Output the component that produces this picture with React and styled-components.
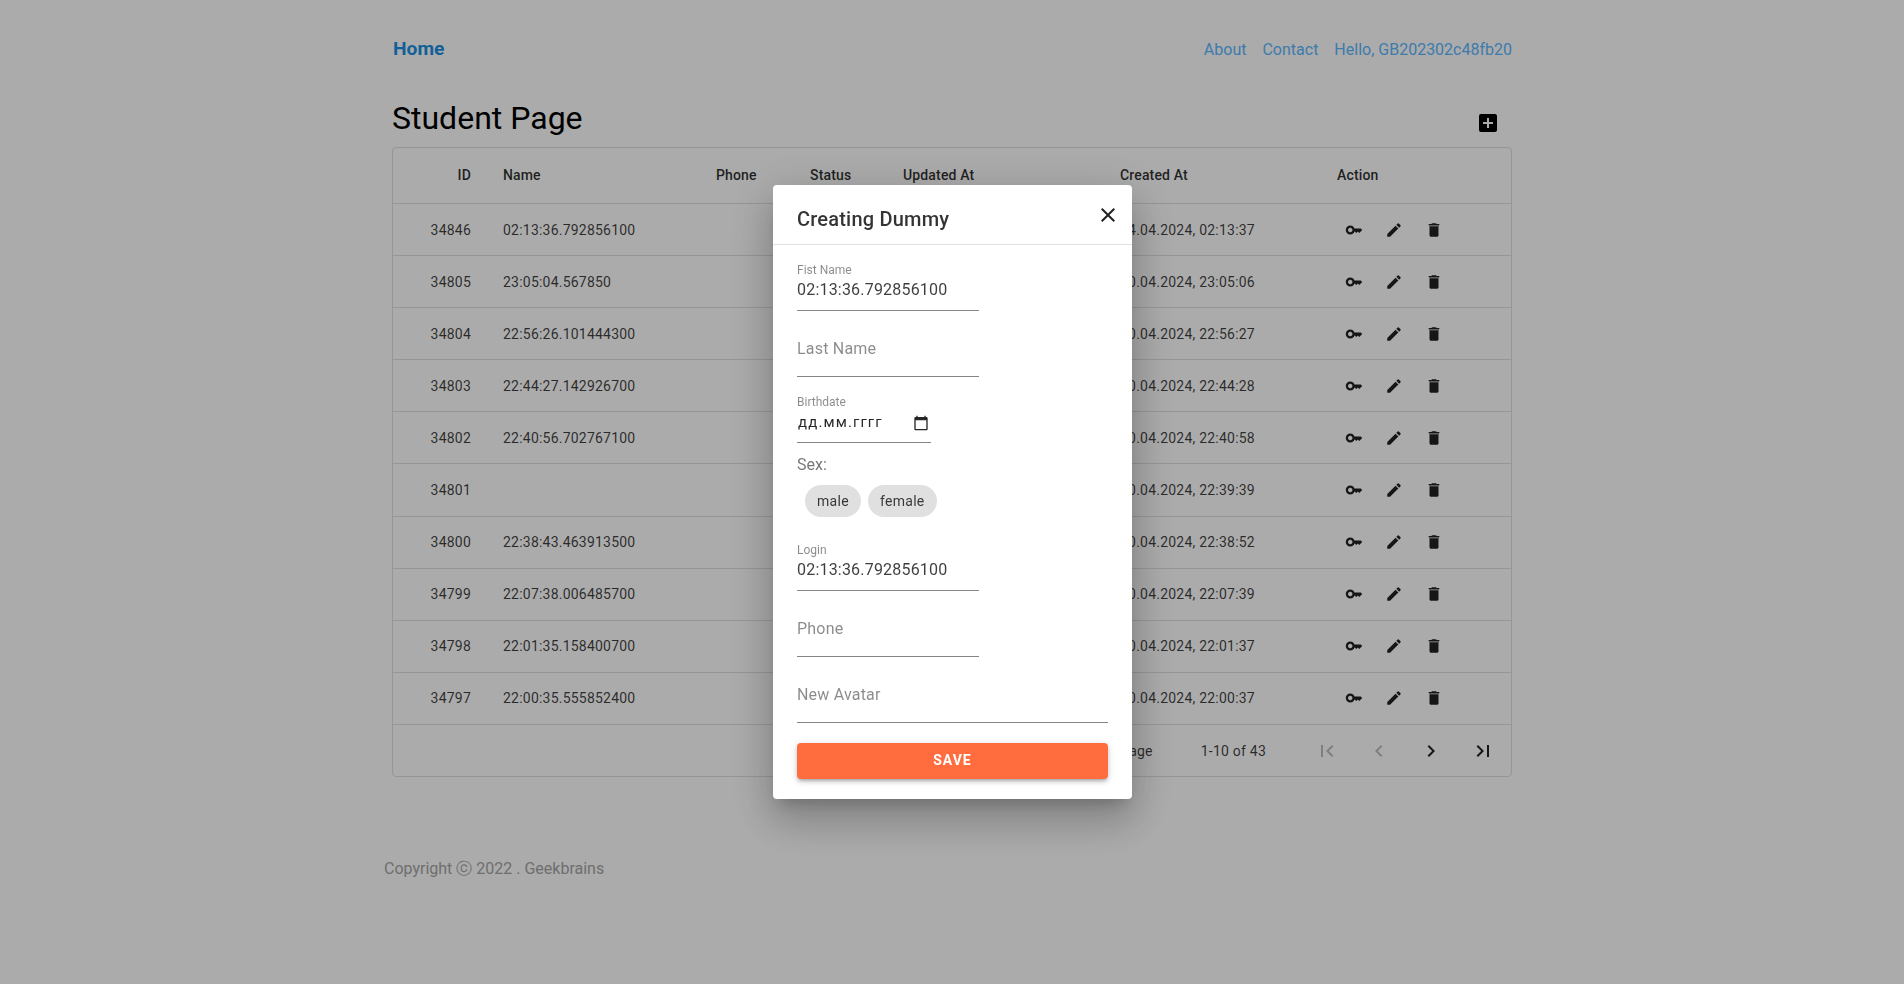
import React from 'react';
import styled, { createGlobalStyle } from 'styled-components';
import {
  MdKey, MdEdit, MdDelete, MdAddBox, MdClose,
  MdFirstPage, MdLastPage, MdChevronLeft, MdChevronRight,
} from 'react-icons/md';

const GlobalStyle = createGlobalStyle`
  html, body {
    margin: 0;
    padding: 0;
    background: #fff;
    font-family: Roboto, "Liberation Sans", sans-serif;
  }
`;

const Page = styled.div`
  width: 1136px;
  margin: 0 auto;
`;

const Main = styled.main`
  padding: 0 8px;
`;

const Nav = styled.nav`
  height: 98px;
  display: flex;
  align-items: center;
  justify-content: space-between;
`;

const HomeLink = styled.a`
  margin: 0 0 2px 1px;
  font-size: 19.2px;
  font-weight: 700;
  color: #1a8fe3;
`;

const NavLinks = styled.div`
  display: flex;
  gap: 16px;
`;

const NavLink = styled.a`
  font-size: 16px;
  color: #5cb8ff;
`;

const TitleRow = styled.div`
  height: 49px;
  display: flex;
  justify-content: space-between;
  align-items: flex-start;
`;

const Title = styled.h1`
  margin: 0;
  font-size: 32px;
  font-weight: 400;
  line-height: 40px;
  color: #000;
`;

const AddButton = styled.button`
  width: 40px;
  height: 40px;
  margin: 5px 4px 0 0;
  padding: 0;
  border: 0;
  background: none;
  color: #000;
  display: flex;
  align-items: center;
  justify-content: center;
`;

const TableFrame = styled.section`
  border: 1px solid rgba(0, 0, 0, 0.12);
  border-radius: 4px;
`;

const Row = styled.div`
  display: grid;
  grid-template-columns: 94px 213px 94px 93px 217px 217px 1fr;
  align-items: center;
  height: ${(p) => (p.$head ? '56px' : '52.1px')};
  padding-bottom: ${(p) => (p.$head ? '2px' : '0')};
  box-sizing: border-box;
  border-bottom: 1px solid rgba(0, 0, 0, 0.12);
  font-size: 14px;
  font-weight: ${(p) => (p.$head ? 500 : 400)};
  letter-spacing: ${(p) => (p.$head ? '0.15px' : '0.22px')};
  color: rgba(0, 0, 0, ${(p) => (p.$head ? 0.82 : 0.76)});
`;

const Cell = styled.div`
  padding: 0 16px;
  text-align: ${(p) => (p.$right ? 'right' : 'left')};
  white-space: nowrap;
`;

const Actions = styled.div`
  display: flex;
  padding-left: 13px;
`;

const ActionButton = styled.button`
  width: 40px;
  height: 40px;
  padding: 0;
  border: 0;
  background: none;
  color: rgba(0, 0, 0, 0.87);
  display: flex;
  align-items: center;
  justify-content: center;
`;

const Pagination = styled.div`
  height: 51px;
  box-sizing: border-box;
  padding: 1px 2px 0 0;
  display: flex;
  align-items: center;
  justify-content: flex-end;
  font-size: 14px;
  letter-spacing: 0.22px;
  color: rgba(0, 0, 0, 0.76);
`;

const RowsLabel = styled.span`
  margin-right: 48px;
`;

const PageCount = styled.span`
  margin-right: 35px;
`;

const PageButton = styled.button`
  width: 52px;
  height: 40px;
  padding: 0;
  border: 0;
  background: none;
  color: ${(p) => (p.disabled ? 'rgba(0, 0, 0, 0.26)' : 'rgba(0, 0, 0, 0.87)')};
  display: flex;
  align-items: center;
  justify-content: center;
`;

const Footer = styled.footer`
  margin-top: 80px;
  font-size: 16px;
  line-height: 24px;
  color: #a6a6a6;
`;

const Backdrop = styled.div`
  position: fixed;
  inset: 0;
  padding-left: 1px;
  background: rgba(0, 0, 0, 0.33);
  display: flex;
  align-items: center;
  justify-content: center;
`;

const Dialog = styled.div`
  width: 359px;
  background: #fff;
  border-radius: 4px;
  box-shadow: 0 11px 15px -7px rgba(0, 0, 0, 0.2), 0 24px 38px 3px rgba(0, 0, 0, 0.14), 0 9px 46px 8px rgba(0, 0, 0, 0.12);
`;

const DialogHead = styled.div`
  height: 60px;
  box-sizing: border-box;
  padding: 0 12px 0 24px;
  border-bottom: 1px solid #e0e0e0;
  display: flex;
  align-items: center;
  justify-content: space-between;
`;

const DialogTitle = styled.h2`
  margin: 8px 0 0;
  font-size: 20px;
  font-weight: 500;
  letter-spacing: 0.2px;
  color: rgba(0, 0, 0, 0.8);
`;

const CloseButton = styled.button`
  width: 24px;
  height: 24px;
  padding: 0;
  border: 0;
  background: none;
  color: rgba(0, 0, 0, 0.87);
  display: flex;
`;

const DialogBody = styled.div`
  padding: 0 24px 20px;
`;

const Field = styled.div`
  width: ${(p) => p.$width || 182}px;
  height: 66px;
  box-sizing: border-box;
  border-bottom: 1px solid rgba(0, 0, 0, 0.48);
  display: flex;
  flex-direction: column;
  justify-content: flex-end;
`;

const FieldLabel = styled.label`
  font-size: 12px;
  line-height: 14px;
  color: rgba(0, 0, 0, 0.46);
`;

const FieldValue = styled.div`
  margin-top: 1px;
  padding-bottom: 9px;
  font-size: 16px;
  line-height: 23px;
  letter-spacing: 0.2px;
  color: rgba(0, 0, 0, 0.76);
`;

const FieldPlaceholder = styled.div`
  padding-bottom: 15px;
  font-size: 16px;
  line-height: 24px;
  letter-spacing: 0.2px;
  color: rgba(0, 0, 0, 0.46);
`;

const DateValue = styled.div`
  margin-top: 2px;
  padding: 0 2px 8px 1px;
  display: flex;
  align-items: center;
  justify-content: space-between;
  font-size: 15px;
  line-height: 23px;
  letter-spacing: 1.1px;
  color: rgba(0, 0, 0, 0.85);
`;

const SexGroup = styled.div`
  height: 82px;
  padding-top: 10px;
  box-sizing: border-box;
`;

const SexLabel = styled.div`
  font-size: 16px;
  line-height: 24px;
  color: rgba(0, 0, 0, 0.55);
`;

const Chips = styled.div`
  margin-top: 8px;
  padding-left: 8px;
  display: flex;
  gap: 7px;
`;

const Chip = styled.span`
  height: 32px;
  padding: 0 12px;
  border-radius: 16px;
  background: #e0e0e0;
  font-size: 14px;
  line-height: 32px;
  letter-spacing: 0.3px;
  color: rgba(0, 0, 0, 0.76);
`;

const SaveButton = styled.button`
  display: block;
  width: 100%;
  height: 36px;
  margin-top: 20px;
  padding: 0 0 2px;
  border: 0;
  border-radius: 4px;
  background: #ff6d3f;
  color: #fff;
  font-family: inherit;
  font-size: 14px;
  font-weight: 700;
  letter-spacing: 1px;
  text-transform: uppercase;
  box-shadow: 0 3px 3px -2px rgba(0, 0, 0, 0.2), 0 3px 4px 0 rgba(0, 0, 0, 0.14), 0 1px 8px 0 rgba(0, 0, 0, 0.12);
`;

const students = [
  ['34846', '02:13:36.792856100', '04.04.2024, 02:13:37'],
  ['34805', '23:05:04.567850', '30.04.2024, 23:05:06'],
  ['34804', '22:56:26.101444300', '30.04.2024, 22:56:27'],
  ['34803', '22:44:27.142926700', '30.04.2024, 22:44:28'],
  ['34802', '22:40:56.702767100', '30.04.2024, 22:40:58'],
  ['34801', '', '30.04.2024, 22:39:39'],
  ['34800', '22:38:43.463913500', '30.04.2024, 22:38:52'],
  ['34799', '22:07:38.006485700', '30.04.2024, 22:07:39'],
  ['34798', '22:01:35.158400700', '30.04.2024, 22:01:37'],
  ['34797', '22:00:35.555852400', '30.04.2024, 22:00:37'],
];

function CalendarIcon() {
  return (
    <svg width="16" height="16" viewBox="0 0 24 24" fill="currentColor">
      <path d="M20 3h-1V1h-2v2H7V1H5v2H4c-1.1 0-2 .9-2 2v16c0 1.1.9 2 2 2h16c1.1 0 2-.9 2-2V5c0-1.1-.9-2-2-2zm0 18H4V8h16v13z" />
    </svg>
  );
}

export default function App() {
  return (
    <>
      <GlobalStyle />
      <Page>
        <Main>
          <Nav>
            <HomeLink>Home</HomeLink>
            <NavLinks>
              <NavLink>About</NavLink>
              <NavLink>Contact</NavLink>
              <NavLink>Hello, GB202302c48fb20</NavLink>
            </NavLinks>
          </Nav>
          <TitleRow>
            <Title>Student Page</Title>
            <AddButton><MdAddBox size={24} /></AddButton>
          </TitleRow>
          <TableFrame>
            <Row $head>
              <Cell $right>ID</Cell>
              <Cell>Name</Cell>
              <Cell>Phone</Cell>
              <Cell>Status</Cell>
              <Cell>Updated At</Cell>
              <Cell>Created At</Cell>
              <Cell>Action</Cell>
            </Row>
            {students.map(([id, name, date]) => (
              <Row key={id}>
                <Cell $right>{id}</Cell>
                <Cell>{name}</Cell>
                <Cell />
                <Cell />
                <Cell />
                <Cell>{date}</Cell>
                <Actions>
                  <ActionButton><MdKey size={18} /></ActionButton>
                  <ActionButton><MdEdit size={18} /></ActionButton>
                  <ActionButton><MdDelete size={18} /></ActionButton>
                </Actions>
              </Row>
            ))}
            <Pagination>
              <RowsLabel>Rows per page</RowsLabel>
              <PageCount>1-10 of 43</PageCount>
              <PageButton disabled><MdFirstPage size={24} /></PageButton>
              <PageButton disabled><MdChevronLeft size={24} /></PageButton>
              <PageButton><MdChevronRight size={24} /></PageButton>
              <PageButton><MdLastPage size={24} /></PageButton>
            </Pagination>
          </TableFrame>
        </Main>
        <Footer>Copyright ⓒ 2022 . Geekbrains</Footer>
      </Page>
      <Backdrop>
        <Dialog>
          <DialogHead>
            <DialogTitle>Creating Dummy</DialogTitle>
            <CloseButton><MdClose size={24} /></CloseButton>
          </DialogHead>
          <DialogBody>
            <Field>
              <FieldLabel>Fist Name</FieldLabel>
              <FieldValue>02:13:36.792856100</FieldValue>
            </Field>
            <Field>
              <FieldPlaceholder>Last Name</FieldPlaceholder>
            </Field>
            <Field $width={134}>
              <FieldLabel>Birthdate</FieldLabel>
              <DateValue>дд.мм.гггг<CalendarIcon /></DateValue>
            </Field>
            <SexGroup>
              <SexLabel>Sex:</SexLabel>
              <Chips>
                <Chip>male</Chip>
                <Chip>female</Chip>
              </Chips>
            </SexGroup>
            <Field>
              <FieldLabel>Login</FieldLabel>
              <FieldValue>02:13:36.792856100</FieldValue>
            </Field>
            <Field>
              <FieldPlaceholder>Phone</FieldPlaceholder>
            </Field>
            <Field $width={311}>
              <FieldPlaceholder>New Avatar</FieldPlaceholder>
            </Field>
            <SaveButton>Save</SaveButton>
          </DialogBody>
        </Dialog>
      </Backdrop>
    </>
  );
}
